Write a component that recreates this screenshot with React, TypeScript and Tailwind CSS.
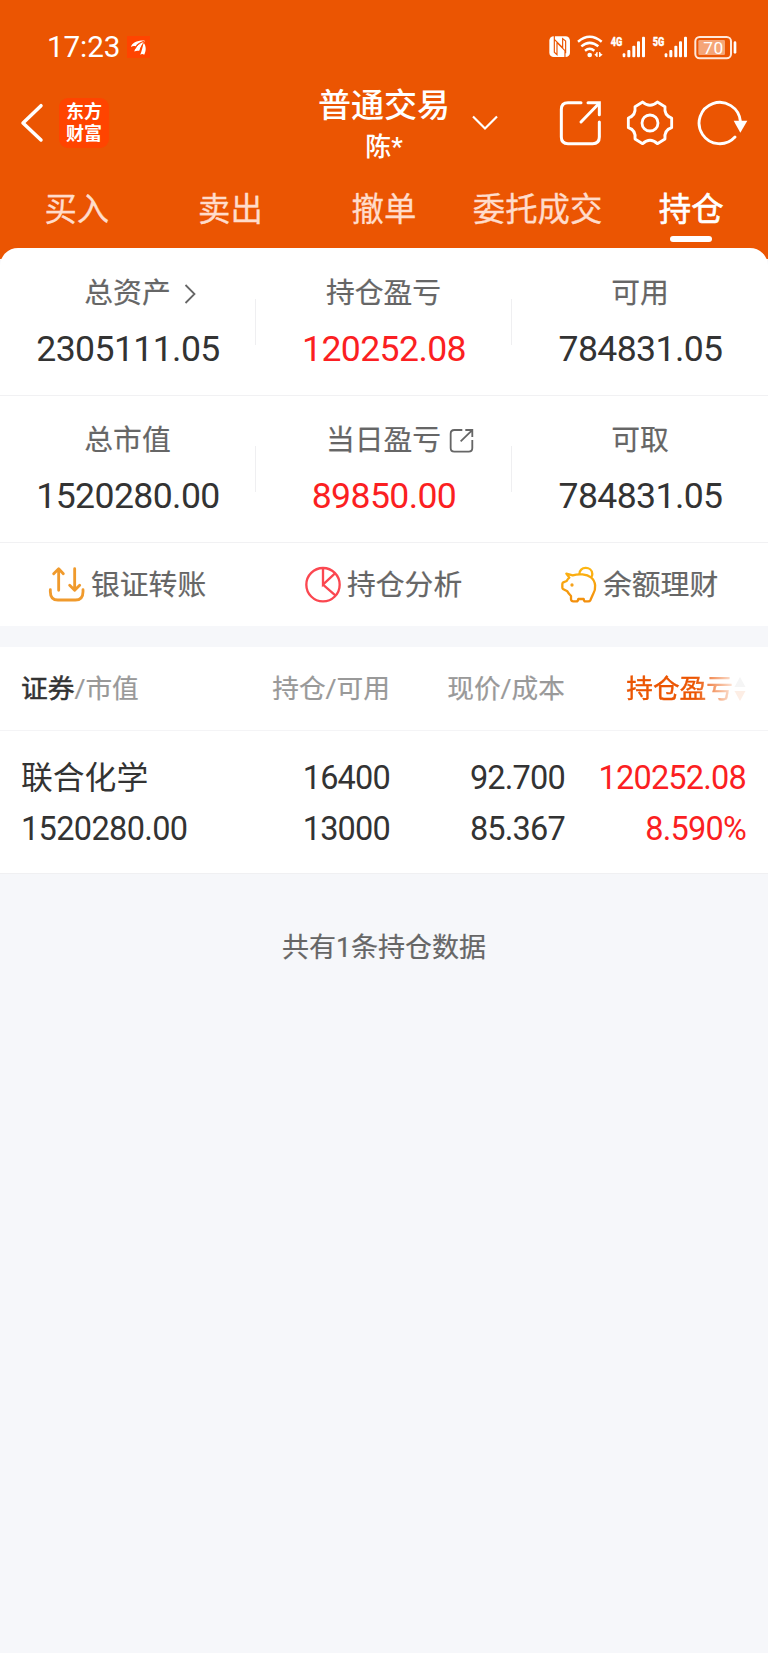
import type { ReactNode } from "react"

type Stat = {
  label: string
  value: string
  red?: boolean
  icon?: ReactNode
}

const tabs = ["买入", "卖出", "撤单", "委托成交", "持仓"]

function AppBadge() {
  return (
    <svg viewBox="382 46 68 68" className="ml-[7px] size-[22.5px] bg-[#ff4400]">
      <g fill="#fff">
        <path d="M394 79C397 67 412 59 436 60C421 64 412 69 408 77C403 75 399 76 394 79Z" />
        <path d="M404 93C408 79 418 66 437 61C428 71 422 80 419 91C413 90 409 91 404 93Z" />
        <path d="M422 103C427 91 430 78 432 66C441 78 440 92 434 103C430 100 426 100 422 103Z" />
      </g>
      <path d="M406 85C411 75 421 66 434 62M420 97C423 84 427 74 434 63" stroke="#ff4400" strokeWidth="2.5" fill="none" />
    </svg>
  )
}

function NfcIcon() {
  return (
    <svg viewBox="110 48 64 64" className="size-[21.3px]">
      <rect x="111" y="49" width="62" height="62" rx="13" fill="#fff" />
      <path d="M126 48V97L134 104V68L158 92V112M126 58L151 83V56L160 63V100" fill="none" stroke="#eb5502" strokeWidth="3.5" />
    </svg>
  )
}

function WifiIcon() {
  return (
    <svg viewBox="196 44 80 72" className="ml-[7px] h-6 w-[26.7px]" fill="none" stroke="#fff">
      <path d="M199 64Q234 35 270 64M209 78Q234 57 260 78M220 91Q234 80 248 91" strokeWidth="7.5" />
      <circle cx="234" cy="104" r="7" fill="#fff" stroke="none" />
      <path d="M256 95V110M264 95V110" strokeWidth="3.5" />
      <path d="M248 103L256 97V109ZM273 103L264 97V109Z" fill="#fff" stroke="none" />
    </svg>
  )
}

function Signal({ name }: { name: string }) {
  return (
    <svg viewBox="290 44 108 72" className="ml-1.5 h-6 w-9 font-['Roboto',sans-serif]" fill="#fff">
      <text x="292" y="76" fontSize="38" fontWeight="900" stroke="#fff" strokeWidth="1" textLength="35" lengthAdjust="spacingAndGlyphs">
        {name}
      </text>
      <rect x="328" y="99" width="8" height="12" rx="3" />
      <rect x="342" y="89" width="9" height="22" rx="3" />
      <rect x="357" y="76" width="9" height="35" rx="3" />
      <rect x="371" y="63" width="9" height="48" rx="3" />
      <rect x="386" y="49" width="9" height="62" rx="3" />
    </svg>
  )
}

function Battery() {
  return (
    <svg viewBox="545 44 129 75" className="ml-1.5 h-[25px] w-[43px] font-['Roboto',sans-serif]">
      <rect x="549" y="50" width="107" height="64" rx="13" fill="none" stroke="#ffe9dc" strokeWidth="6" />
      <rect x="558" y="59" width="80" height="45" rx="4" fill="#f5a577" />
      <rect x="664" y="63" width="8" height="37" rx="4" fill="#fff" />
      <text x="573" y="100" fontSize="52" fill="#fff" textLength="60">
        70
      </text>
    </svg>
  )
}

function ShareIcon() {
  return (
    <svg viewBox="138 234 132 144" className="h-12 w-11" fill="none" stroke="#fff" strokeWidth="9" strokeLinecap="round">
      <path d="M207 245H168Q148 245 148 265V348Q148 368 168 368H242Q262 368 262 348V303" />
      <path d="M207 303L260 248" />
      <path d="M228 245H262V281" />
    </svg>
  )
}

function GearIcon() {
  return (
    <svg viewBox="342 234 144 144" className="ml-6 size-12" fill="none" stroke="#fff" strokeWidth="8.5" strokeLinejoin="round">
      <path d="M392 243Q414 263 436 243L459 257C457 272 463 286 479 291V320C463 325 457 339 459 354L436 368Q414 348 392 368L369 354C371 339 365 325 349 320V291C365 286 371 272 369 257Z" />
      <circle cx="414" cy="306" r="24" />
    </svg>
  )
}

function RefreshIcon() {
  return (
    <svg viewBox="552 234 162 144" className="ml-[22px] h-12 w-[54px]">
      <path d="M669 348A62 62 0 1 1 685 300" fill="none" stroke="#fff" strokeWidth="8.5" strokeLinecap="round" />
      <path d="M665 299H706L685 335Z" fill="#fff" />
    </svg>
  )
}

function TransferIcon() {
  return (
    <svg viewBox="144 526 114 114" className="size-[38px]" fill="none" stroke="#f09a2c" strokeWidth="8.5" strokeLinecap="round" strokeLinejoin="round">
      <path d="M176 599V535M161 549L176 534L190 549" />
      <path d="M224 534V598M209 584L224 599L239 584" />
      <path d="M151 597V603Q151 628 174 628H226Q249 628 249 603V597" />
    </svg>
  )
}

function PieIcon() {
  return (
    <svg viewBox="911 526 114 114" className="size-[38px]" fill="none" stroke="#fb4750" strokeWidth="7">
      <circle cx="968" cy="582" r="50" />
      <path d="M968 532V582L1004 548M968 582L1005 614" />
    </svg>
  )
}

function PiggyIcon() {
  return (
    <svg viewBox="526 526 114 114" className="size-[38px]" fill="none" stroke="url(#piggy)" strokeWidth="7" strokeLinejoin="round">
      <defs>
        <linearGradient id="piggy" x1="0" y1="526" x2="0" y2="640" gradientUnits="userSpaceOnUse">
          <stop offset="0" stopColor="#fdb813" />
          <stop offset="1" stopColor="#f28c0c" />
        </linearGradient>
      </defs>
      <path d="M545 549L564 554C582 549 606 550 619 560C634 572 635 595 625 611L617 629Q615 632 611 632H602Q598 632 597 625H581Q580 632 575 632H566Q560 632 559 626V616Q552 609 548 602L535 595Q533 594 533 590V580Q533 577 536 575L546 571Q549 565 554 561Z" />
      <path d="M584 551C583 526 622 525 623 550Q623 556 619 560" />
      <circle cx="562" cy="583" r="5" fill="#f5a21b" stroke="none" />
    </svg>
  )
}

function ChevronRight() {
  return (
    <svg viewBox="0 0 12 20" className="ml-[13px] h-5 w-3" fill="none" stroke="#666" strokeWidth="1.8">
      <path d="M1.5 1L10.5 10L1.5 19" />
    </svg>
  )
}

function OpenIcon() {
  return (
    <svg viewBox="192 111 76 76" className="ml-2 size-[25.3px]" fill="none" stroke="#666" strokeWidth="5.5">
      <path d="M232 117H208Q197 117 197 128V171Q197 182 208 182H251Q262 182 262 171V147" />
      <path d="M227 151L261 118M241 117H262V138" />
    </svg>
  )
}

const rows: Stat[][] = [
  [
    { label: "总资产", value: "2305111.05", icon: <ChevronRight /> },
    { label: "持仓盈亏", value: "120252.08", red: true },
    { label: "可用", value: "784831.05" },
  ],
  [
    { label: "总市值", value: "1520280.00" },
    { label: "当日盈亏", value: "89850.00", red: true, icon: <OpenIcon /> },
    { label: "可取", value: "784831.05" },
  ],
]

const actions = [
  { label: "银证转账", icon: <TransferIcon /> },
  { label: "持仓分析", icon: <PieIcon /> },
  { label: "余额理财", icon: <PiggyIcon /> },
]

function StatCell({ label, value, red, icon }: Stat) {
  return (
    <div className="flex-1">
      <div className="grid h-10 grid-cols-[1fr_auto_1fr] items-center text-[28.8px] text-[#666] [-webkit-text-stroke:0.2px]">
        <span />
        <span className="leading-[41px]">{label}</span>
        <span>{icon}</span>
      </div>
      <div className={`mt-4 pl-px text-center text-[35.6px] leading-10 tracking-[-0.6px] ${red ? "text-[#fb1f22]" : "text-[#333]"}`}>
        {value}
      </div>
    </div>
  )
}

export default function App() {
  return (
    <div className="min-h-[1653px] bg-[#f6f7fa] font-['Roboto','Noto_Sans_CJK_SC',sans-serif] text-[#333]">
      <header className="h-[259px] bg-[#eb5502] text-white">
        <div className="flex h-[94px] items-center pr-[31px] pl-[47px]">
          <span className="text-[29.6px] leading-9 tracking-[-0.1px]">17:23</span>
          <AppBadge />
          <div className="ml-auto flex items-center">
            <NfcIcon />
            <WifiIcon />
            <Signal name="4G" />
            <Signal name="5G" />
            <Battery />
          </div>
        </div>

        <div className="-mt-[15px] grid h-[87px] grid-cols-[1fr_auto_1fr] items-center">
          <div className="flex items-center pl-5">
            <svg viewBox="60 246 72 120" className="h-10 w-6" fill="none" stroke="#fff" strokeWidth="10.5" strokeLinecap="round" strokeLinejoin="round">
              <path d="M123 254L69 306L123 357" />
            </svg>
            <div className="ml-[15px] flex size-[50px] flex-col items-center justify-center rounded-[9px] bg-[#ff4400] text-lg leading-[21.5px] font-bold">
              <span>东方</span>
              <span>财富</span>
            </div>
          </div>
          <div className="flex flex-col items-center pt-1.5">
            <span className="text-[33px] leading-[42px] font-medium">普通交易</span>
            <span className="pt-px text-[26px] leading-[38px] font-medium">陈*</span>
          </div>
          <div className="flex items-center pr-[18px]">
            <svg viewBox="0 0 26 16" className="ml-[22px] h-4 w-[26px]" fill="none" stroke="#fff" strokeWidth="2.2">
              <path d="M1 1.5L13 13.5L25 1.5" />
            </svg>
            <div className="ml-auto flex items-center">
              <ShareIcon />
              <GearIcon />
              <RefreshIcon />
            </div>
          </div>
        </div>

        <nav className="grid grid-cols-5 pt-5 text-center text-[32.4px] leading-[48px]">
          {tabs.map((tab) => (
            <div
              key={tab}
              className={tab === "持仓" ? "text-white [-webkit-text-stroke:0.6px]" : "text-[#ffdccb] [-webkit-text-stroke:0.3px]"}
            >
              {tab}
              {tab === "持仓" && <div className="mx-auto mt-0.5 h-1.5 w-[42px] rounded-full bg-white" />}
            </div>
          ))}
        </nav>
      </header>

      <main>
        <section className="relative -mt-[11px] rounded-t-[18px] bg-white">
          {rows.map((row, i) => (
            <div key={i} className={`flex border-b border-[#f1f1f3] ${i === 0 ? "h-[148px] pt-[25px]" : "h-[147px] pt-6"}`}>
              {row.map((stat, j) => (
                <div key={stat.label} className="flex flex-1">
                  <StatCell {...stat} />
                  {j < 2 && <div className="mt-[26px] h-[46px] w-px bg-[#efeff1]" />}
                </div>
              ))}
            </div>
          ))}
          <div className="grid h-[83px] grid-cols-3">
            {actions.map(({ label, icon }) => (
              <div key={label} className="flex items-center gap-[5px] pl-12 text-[28.8px] text-[#666] [-webkit-text-stroke:0.2px]">
                {icon}
                <span className="pt-0.5">{label}</span>
              </div>
            ))}
          </div>
        </section>

        <section className="mt-[21px] bg-white">
          <div className="grid h-[84px] grid-cols-[196px_173px_175px_181px] items-center border-b border-[#f4f4f6] pt-0.5 pr-[22px] pl-[21px] text-right text-[26.7px] text-[#999] [-webkit-text-stroke:0.2px]">
            <div className="text-left">
              <span className="text-[#333] [-webkit-text-stroke:0.5px]">证券</span>/市值
            </div>
            <div>持仓/可用</div>
            <div>现价/成本</div>
            <div className="flex items-center justify-end text-[#eb5502] [-webkit-text-stroke:0.4px] [mask-image:linear-gradient(to_right,#000_72%,rgba(0,0,0,0.1)_94%)]">
              持仓盈亏
              <svg viewBox="0 0 12 26" className="ml-px h-[26px] w-3">
                <path d="M6 1L11.5 11H0.5Z" fill="#999" />
                <path d="M6 25L11.5 15H0.5Z" fill="#eb5502" />
              </svg>
            </div>
          </div>
          <div className="grid h-[143px] grid-cols-[196px_173px_175px_181px] border-b border-[#f0f0f2] pt-[22px] pr-[22px] pl-[21px] text-right text-[32.5px] leading-[51px] tracking-[-0.8px]">
            <div className="text-left">
              <div className="text-[31.8px] tracking-normal">联合化学</div>
              <div className="tracking-[-0.65px]">1520280.00</div>
            </div>
            <div>
              <div>16400</div>
              <div>13000</div>
            </div>
            <div>
              <div>92.700</div>
              <div>85.367</div>
            </div>
            <div className="text-[#fb1f22]">
              <div>120252.08</div>
              <div>8.590%</div>
            </div>
          </div>
        </section>

        <p className="mt-[54px] text-center text-[27px] leading-10 text-[#666] [-webkit-text-stroke:0.2px]">共有1条持仓数据</p>
      </main>
    </div>
  )
}
